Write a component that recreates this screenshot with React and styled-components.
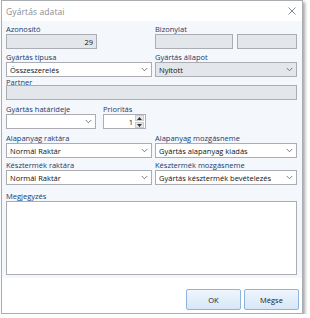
import React from "react";
import styled, { createGlobalStyle } from "styled-components";

const Global = createGlobalStyle`
  html, body { margin: 0; padding: 0; background: #ffffff; }
  body { font-family: "Open Sans", "Noto Sans", sans-serif; }
  * { box-sizing: border-box; }
`;

const Window = styled.div`
  margin: 0 0 0 1px;
  width: 302px;
  height: 314px;
  border: 1px solid #a9acb1;
  background: #ffffff;
  box-shadow: 2px 2px 3px rgba(0, 0, 0, 0.35);
  display: flex;
  flex-direction: column;
`;

const TitleBar = styled.div`
  height: 20px;
  flex: none;
  display: flex;
  align-items: center;
  justify-content: space-between;
  padding: 0 6px 0 4px;
  background: #ffffff;
`;

const Title = styled.span`
  font-size: 8.5px;
  color: #8a8d92;
  letter-spacing: 0.1px;
`;

const Body = styled.div`
  background: #f4f7fb;
  padding: 3px 5px 3px 4px;
  display: grid;
  grid-template-columns: 146px 142px;
  column-gap: 3px;
  align-content: start;
`;

const Footer = styled.div`
  flex: 1;
  display: flex;
  justify-content: flex-end;
  align-items: flex-start;
  gap: 3px;
  padding: 11px 3px 0 0;
`;

const Field = styled.div`
  display: flex;
  flex-direction: column;
  grid-column: ${(p) => (p.$span ? "1 / -1" : "auto")};
  margin-top: ${(p) => p.$top || 0}px;
`;

const Label = styled.div`
  height: 10px;
  line-height: 10px;
  font-size: 7.5px;
  color: #1b3a6b;
  white-space: nowrap;
  margin-bottom: ${(p) => p.$pull || 0}px;
`;

const Box = styled.div`
  height: ${(p) => p.$h || 15}px;
  border: 1px solid #abadb3;
  background: ${(p) => (p.$disabled ? "#e3e7ec" : "#ffffff")};
  display: flex;
  align-items: center;
  justify-content: ${(p) => (p.$right ? "flex-end" : "space-between")};
  padding: 0 3px 0 3px;
  font-size: 7.5px;
  color: #111;
  white-space: nowrap;
  width: ${(p) => (p.$w ? p.$w + "px" : "auto")};
`;

const Row = styled.div`
  display: flex;
  gap: ${(p) => p.$gap || 4}px;
`;

const Split = styled.div`
  display: grid;
  grid-template-columns: 90px 43px;
  column-gap: 7px;
`;

const Chevron = () => (
  <svg width="7" height="5" viewBox="0 0 7 5" style={{ flex: "none" }}>
    <path d="M0.8 1 L3.5 3.8 L6.2 1" fill="none" stroke="#6b6f75" strokeWidth="0.9" />
  </svg>
);

const Spin = styled.div`
  width: 9px;
  height: 13px;
  display: flex;
  flex-direction: column;
  gap: 1px;
  margin-left: 2px;
  margin-right: -2px;
`;

const SpinBtn = styled.div`
  flex: 1;
  background: #e6e8eb;
  border: 1px solid #c9cbcf;
  display: flex;
  align-items: center;
  justify-content: center;
`;

const Button = styled.button`
  height: 21px;
  width: ${(p) => p.$w}px;
  border: 1px solid #8fb4dc;
  border-radius: 2px;
  background: linear-gradient(#eef5fd, #d7e7f8);
  font-family: inherit;
  font-size: 7.5px;
  color: #1a1a1a;
  padding: 0;
`;

const CloseIcon = () => (
  <svg width="8" height="8" viewBox="0 0 8 8">
    <path d="M0.5 0.5 L7.5 7.5 M7.5 0.5 L0.5 7.5" stroke="#7a7d82" strokeWidth="0.9" />
  </svg>
);

const Select = ({ value, disabled }) => (
  <Box $disabled={disabled}>
    <span>{value}</span>
    <Chevron />
  </Box>
);

export default function App() {
  return (
    <>
      <Global />
      <Window>
        <TitleBar>
          <Title>Gyártás adatai</Title>
          <CloseIcon />
        </TitleBar>
        <Body>
          <Field>
            <Label>Azonosító</Label>
            <Box $disabled $right $w={91}>29</Box>
          </Field>
          <Field>
            <Label>Bizonylat</Label>
            <Row $gap={4}>
              <Box $disabled $w={78} />
              <Box $disabled $w={60} />
            </Row>
          </Field>

          <Field $top={3}>
            <Label>Gyártás típusa</Label>
            <Select value="Összeszerelés" />
          </Field>
          <Field $top={3}>
            <Label>Gyártás állapot</Label>
            <Select value="Nyitott" disabled />
          </Field>

          <Field $span $top={0}>
            <Label $pull={-2}>Partner</Label>
            <Box $disabled />
          </Field>

          <Field $top={4}>
            <Split>
              <Field>
                <Label>Gyártás határideje</Label>
                <Select value="" />
              </Field>
              <Field>
                <Label>Prioritás</Label>
                <Box $right>
                  1
                  <Spin>
                    <SpinBtn>
                      <svg width="5" height="3" viewBox="0 0 5 3"><path d="M0 3 L2.5 0 L5 3 Z" fill="#333" /></svg>
                    </SpinBtn>
                    <SpinBtn>
                      <svg width="5" height="3" viewBox="0 0 5 3"><path d="M0 0 L2.5 3 L5 0 Z" fill="#333" /></svg>
                    </SpinBtn>
                  </Spin>
                </Box>
              </Field>
            </Split>
          </Field>
          <div />

          <Field $top={4}>
            <Label>Alapanyag raktára</Label>
            <Select value="Normál Raktár" />
          </Field>
          <Field $top={4}>
            <Label>Alapanyag mozgásneme</Label>
            <Select value="Gyártás alapanyag kiadás" />
          </Field>

          <Field $top={2}>
            <Label>Késztermék raktára</Label>
            <Select value="Normál Raktár" />
          </Field>
          <Field $top={2}>
            <Label>Késztermék mozgásneme</Label>
            <Select value="Gyártás késztermék bevételezés" />
          </Field>

          <Field $span $top={6}>
            <Label>Megjegyzés</Label>
            <Box $h={74} />
          </Field>
        </Body>
        <Footer>
          <Button $w={55}>OK</Button>
          <Button $w={55}>Mégse</Button>
        </Footer>
      </Window>
    </>
  );
}
